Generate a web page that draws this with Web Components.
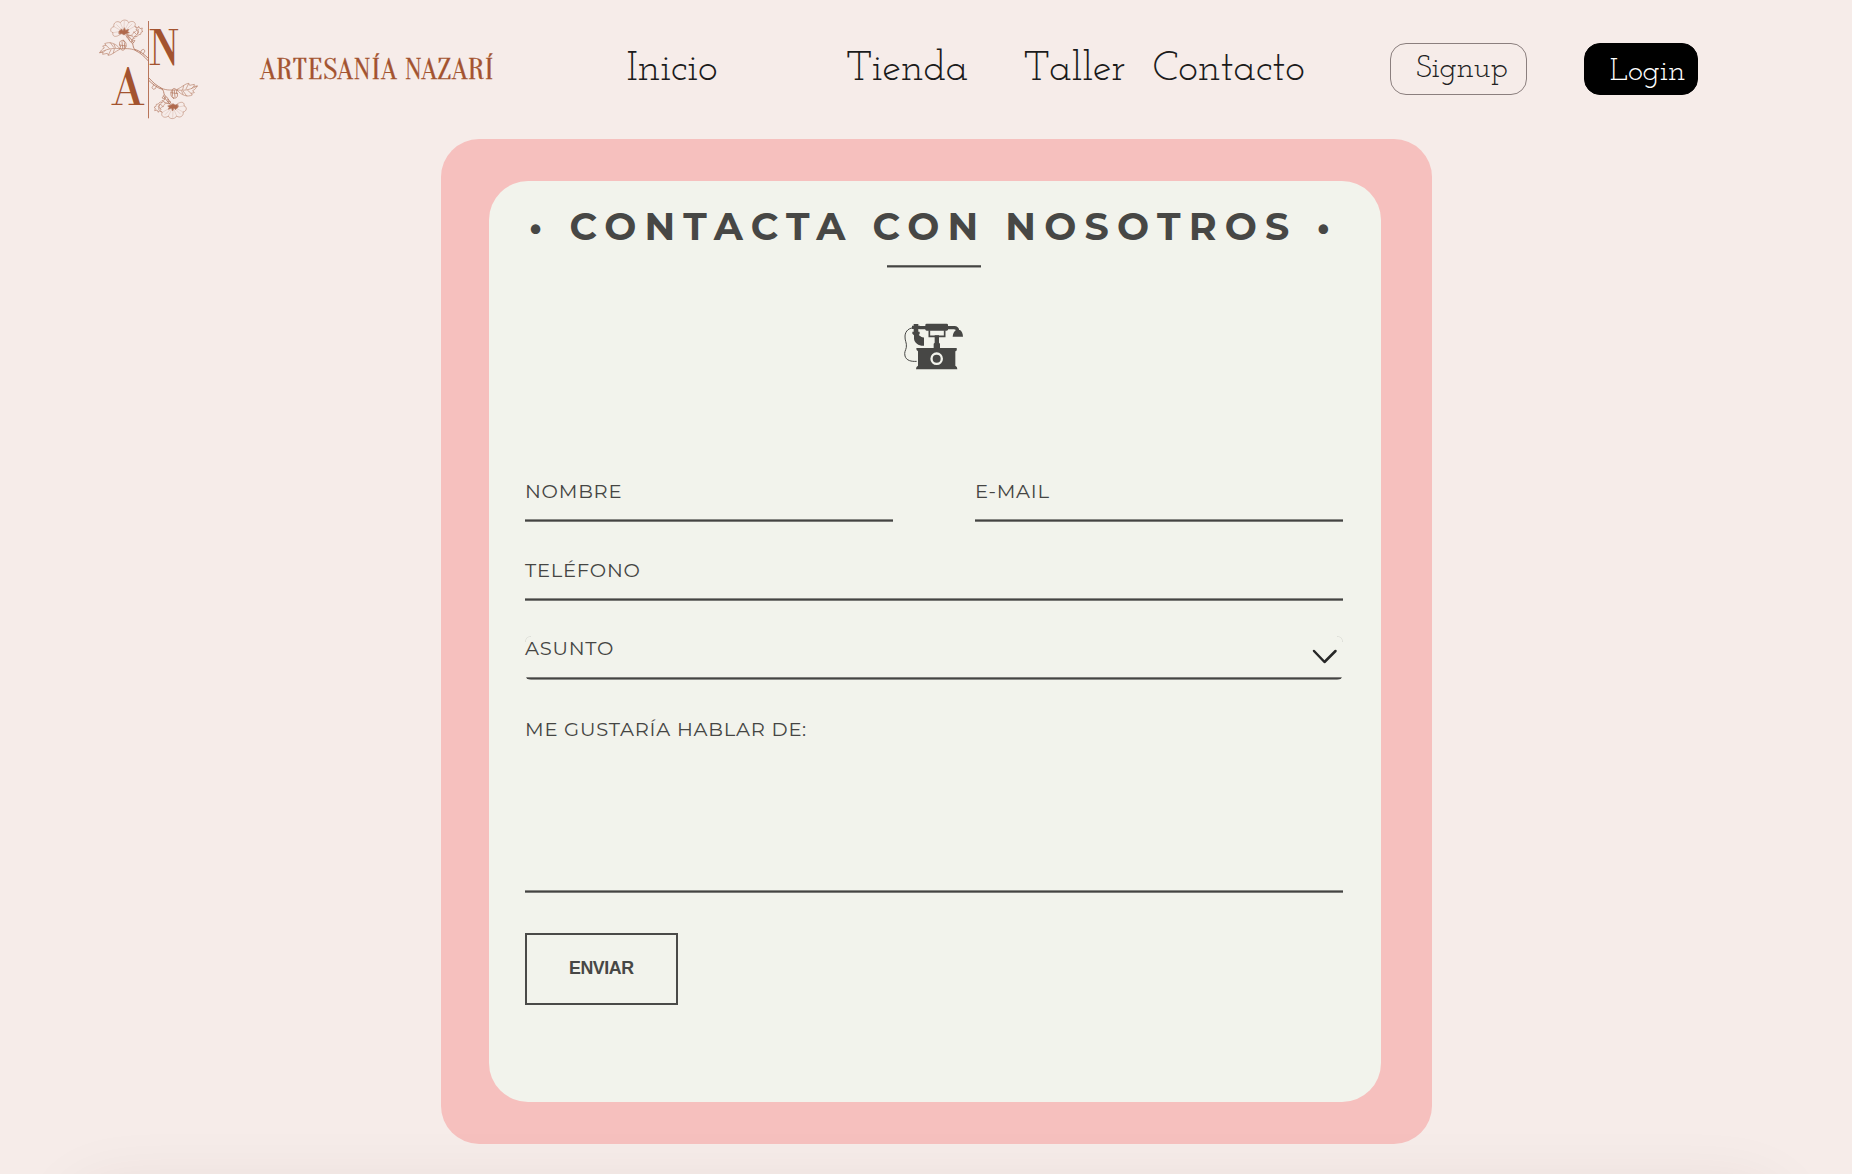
<!DOCTYPE html>
<html lang="es">
<head>
<meta charset="utf-8">
<title>Artesanía Nazarí</title>
<style>
html,body{margin:0;height:100%;overflow:hidden;background:#f6ece9}
</style>
</head>
<body>
<na-page></na-page>
<script>
const def=(name,html,after)=>customElements.define(name,class extends HTMLElement{
  connectedCallback(){
    if(this.shadowRoot)return;
    const t=document.createElement('template');
    t.innerHTML=html;
    this.attachShadow({mode:'open'}).append(t.content.cloneNode(true));
    if(after)after(this,this.shadowRoot);
  }
});

/* Spreads its text evenly over the width "w". */
def('fit-text',`<style>:host{display:block;flex:none;white-space:nowrap;font-kerning:none}span{display:inline-block}</style><span></span>`,(el,root)=>{
  const s=root.querySelector('span'),w=+el.getAttribute('w'),txt=el.getAttribute('text');
  el.style.width=w+'px';
  s.textContent=txt;
  const n=[...txt].length-1;
  if(n>0)s.style.letterSpacing=((w-s.getBoundingClientRect().width)/n)+'px';
});

def('na-logo',`<style>:host{display:block;flex:none;width:120px;height:120px}svg{display:block}text{font-family:"Libre Bodoni","Playfair Display","Liberation Serif",serif;fill:#a3532f}</style>
<svg width="120" height="120" viewBox="0 0 360 360" fill="none" stroke="#b47a62" stroke-width="2" stroke-linecap="round" stroke-linejoin="round">
<defs><g id="f">
<path d="M92 72C78 84 66 80 69 68C58 66 61 51 72 50C68 39 82 30 91 38C97 27 113 28 116 38C127 29 141 38 134 49C145 54 141 66 131 66C129 77 116 80 109 73" opacity=".8"/>
<path d="M72 50L90 60M91 38L98 55M116 38L107 55M134 49L113 61M69 68L88 65M80 44L93 57M103 34L102 53M126 42L111 57" stroke-width="1.1" opacity=".6"/>
<path d="M87 64l8-7 4 5 4-9 4 8 9-3-3 7 5 3-10 3-6 4-6-4-8 1z" fill="#b0694c" stroke-width="2"/>
<path d="M136 50l8 4 2-5 4 7 7-2-2 7 4 3-6 3-1 6-6 1-5 6-7-1-4 4-3-6M138 58l8 8-5 7M145 58l-2 14M132 66l8 8-6 6" stroke-width="1.9"/>
<path d="M108 76C116 87 118 94 128 101C130 108 129 114 137 122C150 128 163 139 174 152M111 74C120 82 124 88 130 98M134 118C149 121 163 134 174 144" stroke-width="2.6"/>
<path d="M118 88l-3-8-5 1M124 96l4-10 7-2M151 128l4-8 6-2 4 5-5 8M113 74l12 4M128 90l7 2-6 8" stroke-width="2"/>
<path d="M136 121C118 113 105 117 88 116M91 109C84 97 92 90 99 92C108 93 111 105 106 114C101 126 88 120 91 109M96 95l2 20M104 98l-1 17M88 105l20 3M100 90l3 5" stroke-width="2.2"/>
<path d="M89 115C77 100 59 94 44 101L48 106L38 108L43 114C36 117 33 122 29 128L39 127L38 133L52 130L55 136C66 135 73 126 89 118M29 128C49 118 65 113 88 116M48 106l10 9M61 98l10 14M55 135l8-16M40 127l6-6M72 103l4 10M70 129l3-12" stroke-width="2" opacity=".9"/>
</g></defs>
<path d="M175.5 33V325" stroke="#b8755a" stroke-width="3" stroke-linecap="butt"/>
<use href="#f"/><use href="#f" transform="rotate(180 175.500 178)"/>
<g stroke="none"><text x="178" y="164" font-size="142" textLength="88" lengthAdjust="spacingAndGlyphs">N</text>
<text x="67" y="285" font-size="146" textLength="94" lengthAdjust="spacingAndGlyphs">A</text></g>
</svg>`);

def('na-button',`<style>
:host{display:block;flex:none;box-sizing:border-box;height:52px;border-radius:16px;border:1.5px solid #8b7f7e;color:#222;font:32px/40px "Josefin Slab","Liberation Serif",serif}
:host([solid]){background:#000;border-color:#000;color:#fff}
</style><slot></slot>`);

def('na-header',`<style>
:host{display:flex;align-items:flex-start;height:139px;box-sizing:border-box;padding-left:90px}
na-logo{margin-top:10px}
.brand{font:29.500px/40px Oranienbaum,"Liberation Serif",serif;color:#a3532f;-webkit-text-stroke:.3px #a3532f;margin:50px 0 0 50px}
nav{display:flex;margin:39px 0 0 132.900px;font:42px/61px "Josefin Slab","Liberation Serif",serif;color:#1b1b1b}
.su{margin:43px 0 0 85px;width:137px;padding:5px 0 0 25px}
.lo{margin:43px 0 0 57px;width:114px;padding:8px 0 0 25px}
</style>
<na-logo></na-logo>
<fit-text class="brand" text="ARTESANÍA NAZARÍ" w="233.5"></fit-text>
<nav><fit-text text="Inicio" w="91.2"></fit-text>
<fit-text text="Tienda" w="122.500" style="margin-left:128.300px"></fit-text>
<fit-text text="Taller" w="102.3" style="margin-left:55px"></fit-text>
<fit-text text="Contacto" w="152" style="margin-left:27.200px"></fit-text></nav>
<na-button class="su"><fit-text text="Signup" w="91.8"></fit-text></na-button>
<na-button class="lo" solid><fit-text text="Login" w="75.5"></fit-text></na-button>`);

def('na-phone',`<style>:host{display:block;width:90px;height:70px}svg{display:block}</style>
<svg width="90" height="70" viewBox="0 0 270 210" fill="#474745">
<path d="M74 53C58 53 46 62 45 78C44 92 51 98 49 112C47 122 42 126 45 138C49 152 64 155 80 154" fill="none" stroke="#474745" stroke-width="3"/>
<path d="M66 47h24v10H66zM71 42h14v24h-14zM88 48h20v10H88zM170 48h23q13 0 15 14l-9 2q-1-6-7-6h-22z"/>
<rect x="106" y="41" width="68" height="21" rx="4"/>
<path d="M198 60h12q8 5 9 20h-31q1-14 10-20zM67 65h22v7l-3 3q13 10 16 7v25C87 108 73 99 72 86v-10l-5-5z"/>
<path d="M118 61v18h46V61" fill="none" stroke="#474745" stroke-width="5"/>
<path d="M134 76h13v22l3 3v13h-19v-13l3-3zM79 114h121q2 9-4 10v43q6 2 6 11H78q0-9 6-11v-43q-6-2-5-10z"/>
<circle cx="140" cy="146" r="15.500" fill="none" stroke="#f2f3ec" stroke-width="7"/>
</svg>`);

def('na-field',`<style>
:host{display:flex;justify-content:space-between;flex:none;box-sizing:border-box;height:43px;font:19.500px/24px Montserrat,Inter,sans-serif;letter-spacing:.77px;color:#454543;white-space:nowrap;
background:linear-gradient(#888884 1px,#444442 1px 2px,#7a7a77 2px) bottom/100% 3px no-repeat}
:host([select]){height:44px;border-radius:6px;
background:linear-gradient(#7d7d7a 1px,#444442 1px 2px,#8d8d8a 2px) bottom/100% 3px no-repeat,radial-gradient(circle at 6px 6px,transparent 5px,#dcddd7 5.500px) 0 0/6px 6px no-repeat,radial-gradient(circle at 0 6px,transparent 5px,#dcddd7 5.500px) 100% 0/6px 6px no-repeat}
:host([area]){height:176px}
svg{display:none;flex:none;width:36px;height:24px;margin:8px .5px 0 0}
:host([select]) svg{display:block}
</style><slot></slot><svg viewBox="0 0 36 24" fill="none" stroke="#272727" stroke-width="2.500" stroke-linecap="round" stroke-linejoin="round"><path d="M7 7L17.500 18L28.500 7"/></svg>`);

def('na-form',`<style>
:host{display:flex;flex-direction:column;box-sizing:border-box;width:892px;height:921px;border-radius:39px;background:#f2f3ec;padding:21px 38px 0 36px}
h1{margin:0 -20px 0 3.800px;height:50px;font:700 38px/50px Montserrat,Inter,sans-serif;letter-spacing:8.220px;white-space:nowrap;color:#474745}
hr{flex:none;width:94px;height:3px;margin:13px 0 0 362px;border:0;background:linear-gradient(#6b6b68 1px,#444442 1px 2px,#a2a29e 2px)}
na-phone{margin:42px 0 0 365px}
.row{display:flex;justify-content:space-between;margin-top:99px}
.row na-field{width:368px}
button{display:block;align-self:flex-start;box-sizing:border-box;width:153px;height:72px;margin:40px 0 0;padding:0 0 3px 42px;background:none;border:2px solid #4a4a48;border-radius:0;font:700 17.800px/24px "Liberation Sans",sans-serif;color:#474745;text-align:left}
</style>
<h1>• CONTACTA CON NOSOTROS •</h1>
<hr><na-phone></na-phone>
<div class="row"><na-field>NOMBRE</na-field><na-field>E-MAIL</na-field></div>
<na-field style="margin-top:36px">TELÉFONO</na-field>
<na-field select style="margin-top:35px">ASUNTO</na-field>
<na-field area style="margin-top:37px">ME GUSTARÍA HABLAR DE:</na-field>
<button type="button"><fit-text text="ENVIAR" w="65"></fit-text></button>`);

def('na-page',`<style>
:host{display:block;position:relative;width:1852px;height:1174px;overflow:hidden;background:#f6ece9}
main{box-sizing:border-box;width:991px;height:1005px;margin-left:441px;padding:42px 0 0 48px;border-radius:38px;background:#f6c0be}
.shade{position:absolute;left:75px;right:75px;top:1192px;height:100px;border-radius:30px;box-shadow:0 0 70px rgba(70,30,30,.09);pointer-events:none}
</style>
<na-header></na-header><main><na-form></na-form></main><div class="shade"></div>`);
</script>
</body>
</html>
